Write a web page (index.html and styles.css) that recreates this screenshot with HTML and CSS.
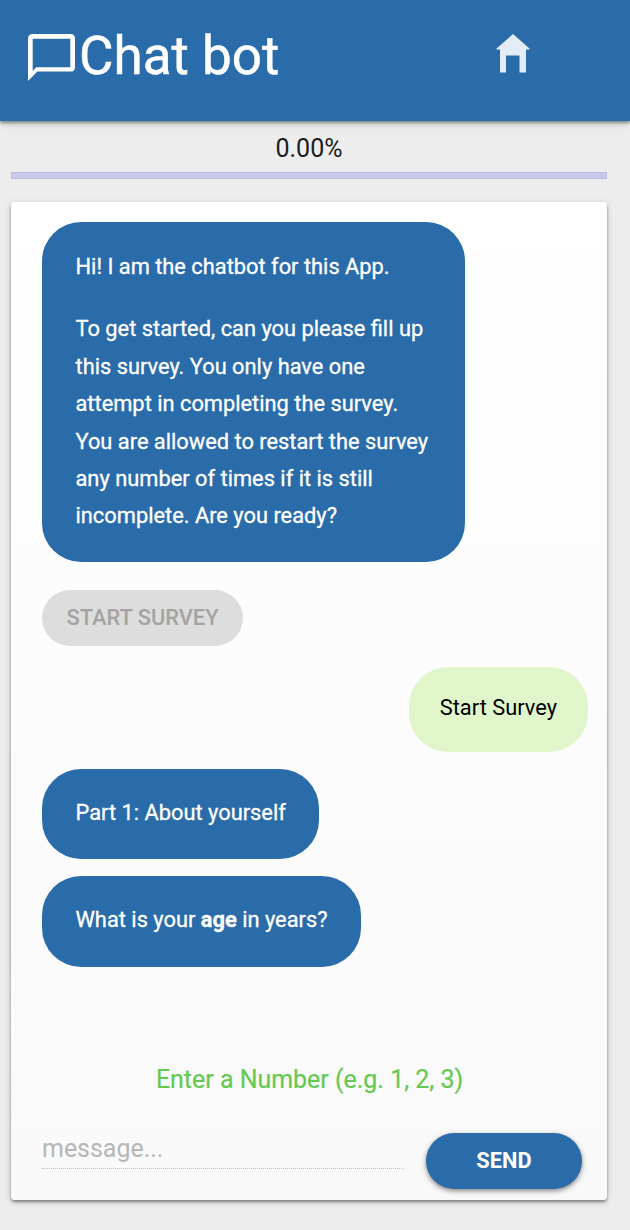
FILE: index.html
```html
<!DOCTYPE html>
<html lang="en">
<head>
  <meta charset="UTF-8">
  <meta name="viewport" content="width=device-width, initial-scale=1">
  <title>Chat bot</title>
  <link rel="stylesheet" href="styles.css">
</head>
<body>

<header class="navbar">
  <div class="brand">
    <svg class="chat-icon" viewBox="0 0 20 20" preserveAspectRatio="none">
      <path fill="#fff" fill-rule="evenodd" d="M2 0H18Q20 0 20 2V14Q20 16 18 16H4L0 20V2Q0 0 2 0ZM2 2V15.7L3.5 14.2H18V2Z"/>
    </svg>
    <h1>Chat bot</h1>
  </div>
  <a class="home" href="#" aria-label="Home">
    <svg viewBox="0 0 34 39">
      <path fill="#e3ebf4" d="M17 0L33.5 14.5V15.5H30V38.5H23.5V21.5H10V38.5H4V15.5H0.5V14.5Z"/>
    </svg>
  </a>
</header>

<main class="container">
  <div class="percent">0.00%</div>
  <div class="progress"></div>

  <div class="card">
    <div class="messages">
      <div class="bubble bot intro">
        <p>Hi! I am the chatbot for this App.</p>
        <p>To get started, can you please fill up this survey. You only have one attempt in completing the survey. You are allowed to restart the survey any number of times if it is still incomplete. Are you ready?</p>
      </div>
      <button class="option-btn" disabled>START SURVEY</button>
      <div class="bubble user">Start Survey</div>
      <div class="bubble bot part">Part 1: About yourself</div>
      <div class="bubble bot question">What is your <b>age</b> in years?</div>
    </div>

    <div class="hint">Enter a Number (e.g. 1, 2, 3)</div>

    <form class="composer">
      <input type="text" placeholder="message...">
      <button type="button" class="send-btn">SEND</button>
    </form>
  </div>
</main>

</body>
</html>
```

FILE: styles.css
```css
:root {
  --primary: #2a6caa;
  --bg: #ededed;
}
* { margin: 0; padding: 0; box-sizing: border-box; }
body {
  font-family: Roboto, sans-serif;
  background: var(--bg);
  min-height: 100vh;
  color: #1c1c1c;
}
.navbar {
  display: flex;
  justify-content: space-between;
  height: 121px;
  padding: 0 100px 0 28px;
  background: var(--primary);
  box-shadow: 0 2px 3px rgba(0,0,0,0.4), 0 3px 10px rgba(0,0,0,0.12);
}
.brand {
  display: flex;
  align-items: flex-start;
  gap: 4px;
  color: #fff;
}
.chat-icon {
  width: 47px;
  height: 47px;
  margin-top: 34px;
}
h1 {
  font-size: 53px;
  font-weight: 400;
  line-height: 62px;
  margin-top: 25px;
  -webkit-text-stroke: 0.5px;
}
.home {
  width: 34px;
  margin-top: 34px;
}
.home svg {
  display: block;
  width: 34px;
  height: 39px;
}
.container {
  width: 596px;
  margin-left: 11px;
}
.percent {
  height: 51px;
  line-height: 56px;
  font-size: 25px;
  text-align: center;
}
.progress {
  height: 7px;
  background: #c6cae8;
  border: 1px solid #babfe6;
}
.card {
  display: flex;
  flex-direction: column;
  height: 998px;
  margin-top: 23px;
  padding: 20px 19px 11px 31px;
  background: linear-gradient(#fff, #f9f9f9);
  border-radius: 4px;
  box-shadow: 0 2px 3px rgba(0,0,0,0.4), 0 2px 8px rgba(0,0,0,0.14);
}
.messages {
  display: flex;
  flex-direction: column;
  align-items: flex-start;
  height: 834px;
}
.bubble {
  font-size: 21.84px;
  line-height: 37.4px;
  border-radius: 39px;
}
.bot {
  height: 90.5px;
  padding: 25px 33.5px;
  background: var(--primary);
  color: #fff;
  -webkit-text-stroke: 0.3px;
}
.intro {
  width: 423px;
  height: 340px;
  padding-top: 26px;
}
.intro p + p {
  margin-top: 25px;
}
.option-btn {
  width: 201px;
  height: 56px;
  margin-top: 27.5px;
  padding-bottom: 1px;
  border: none;
  border-radius: 28px;
  background: #ddd;
  color: #a3a3a3;
  font-family: inherit;
  font-size: 21.84px;
  font-weight: 500;
}
.user {
  align-self: flex-end;
  height: 85px;
  margin-top: 21px;
  padding: 22px 31px;
  background: #e1f5cb;
  color: #000;
}
.part {
  margin-top: 17px;
}
.question {
  margin-top: 17px;
}
.hint {
  height: 77px;
  line-height: 48px;
  margin: 0 -1px 0 -12px;
  font-size: 24.96px;
  text-align: center;
  color: #65c951;
  -webkit-text-stroke: 0.2px;
}
.composer {
  display: flex;
  justify-content: space-between;
  padding-right: 6px;
}
.composer input {
  width: 362px;
  height: 36px;
  padding-bottom: 4px;
  border: none;
  border-bottom: 1px dotted #c4c4c4;
  background: transparent;
  font-family: inherit;
  font-size: 24.96px;
  outline: none;
}
.composer input::placeholder {
  color: #b6b6b6;
}
.send-btn {
  width: 156px;
  height: 56px;
  padding-bottom: 2px;
  border: none;
  border-radius: 28px;
  background: var(--primary);
  color: #fff;
  font-family: inherit;
  font-size: 21.84px;
  font-weight: 700;
  box-shadow: 0 2px 4px rgba(0,0,0,0.35), 0 2px 7px rgba(0,0,0,0.15);
}
```
